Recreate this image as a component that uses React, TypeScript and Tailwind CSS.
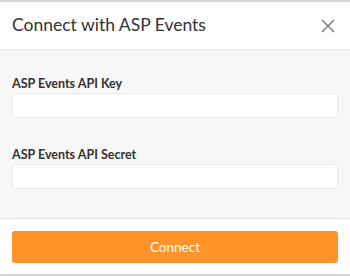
export default function App() {
  return (
    <div
      className="w-[350px] h-[276px] flex flex-col bg-white border-t-2 border-b-2 border-[#d6d6d6] text-[#333]"
      style={{ fontFamily: "Lato, 'Open Sans', sans-serif" }}
    >
      {/* header */}
      <div className="h-[48px] flex items-center justify-between pl-3 pr-[15px] border-b border-[#e6e6e6]">
        <h1 className="text-[17.5px] text-[#333]">Connect with ASP Events</h1>
        <button aria-label="Close" className="text-[#777]">
          <svg width="14" height="14" viewBox="0 0 14 14" fill="none" stroke="currentColor" strokeWidth="1.4">
            <path d="M1 1L13 13M13 1L1 13" />
          </svg>
        </button>
      </div>

      {/* body */}
      <div className="flex-1 bg-[#f7f7f7] px-3 pt-[26px] flex flex-col">
        <label className="text-[12.5px] font-bold leading-[15px] text-[#333]">ASP Events API Key</label>
        <input className="mt-[2px] h-[25px] w-full bg-white border border-[#ebebeb] rounded-[3px] outline-none" />
        <label className="mt-[29px] text-[12.5px] font-bold leading-[15px] text-[#333]">ASP Events API Secret</label>
        <input className="mt-[2px] h-[25px] w-full bg-white border border-[#ebebeb] rounded-[3px] outline-none" />
      </div>

      {/* footer */}
      <div className="h-[56px] border-t border-[#e6e6e6] px-3 pt-[12px]">
        <button className="w-full h-[32px] rounded-[3px] bg-[#ff932b] text-white text-[13.5px]">Connect</button>
      </div>
    </div>
  );
}
